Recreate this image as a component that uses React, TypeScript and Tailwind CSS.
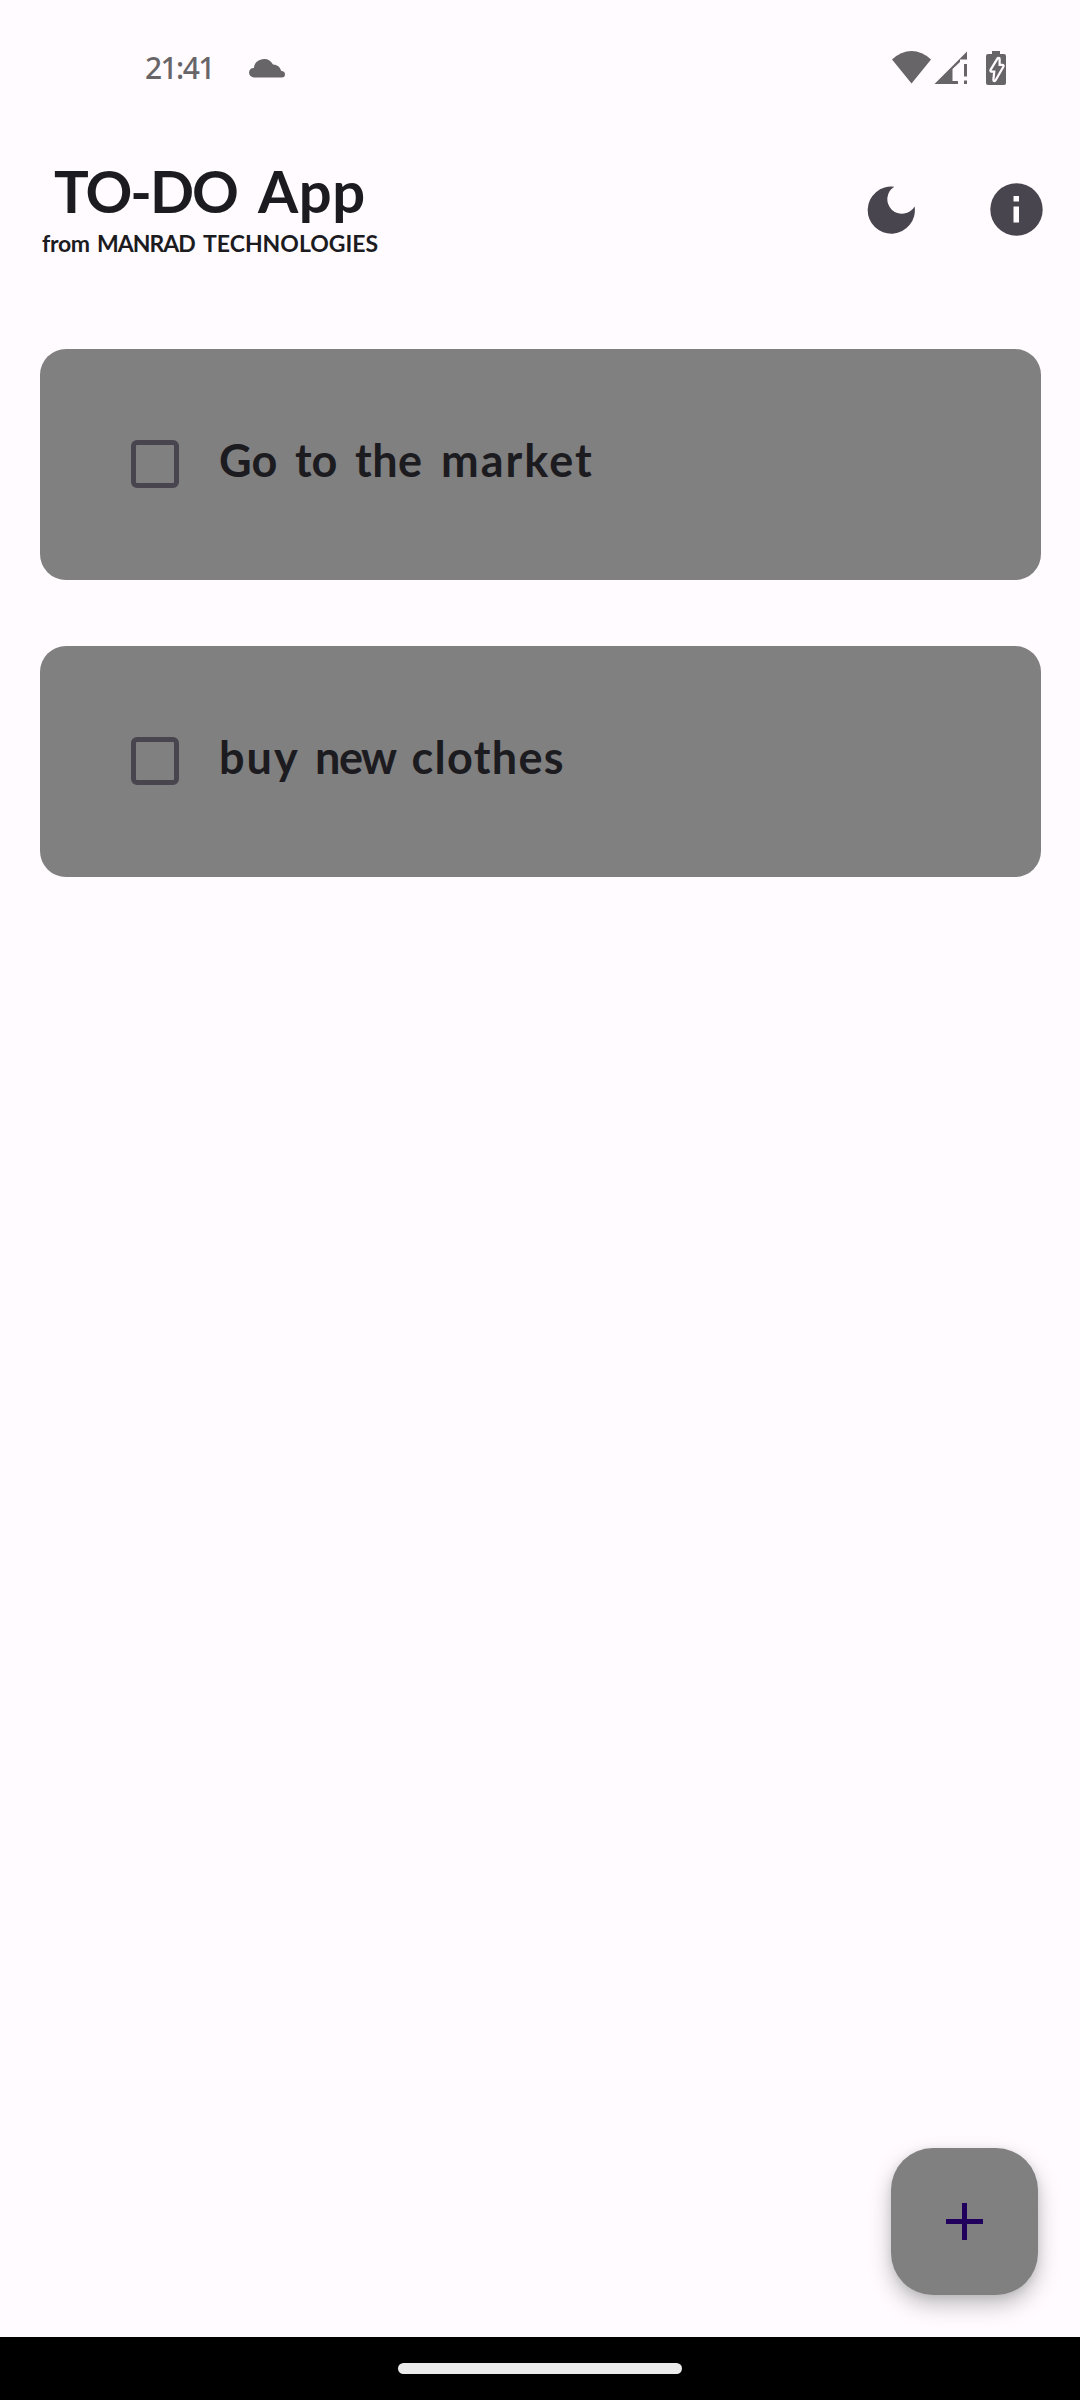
import { useState } from "react";

type Word = { text: string; className: string };
type Todo = { id: number; words: Word[] };

const todos: Todo[] = [
  {
    id: 1,
    words: [
      { text: "Go", className: "w-[76px]" },
      { text: "to", className: "w-[60px]" },
      { text: "the", className: "w-[86px] tracking-[0.5px]" },
      { text: "market", className: "tracking-[2px]" },
    ],
  },
  {
    id: 2,
    words: [
      { text: "buy", className: "w-[96px] tracking-[2px]" },
      { text: "new", className: "w-[96.5px] tracking-[-1.5px]" },
      { text: "clothes", className: "tracking-[1.3px]" },
    ],
  },
];

function StatusBar() {
  return (
    <div className="flex h-[136px] items-start pt-[50px] text-[#686569]">
      <span className="ml-[145px] w-[104px] font-['Noto_Sans',sans-serif] text-[30px] leading-[36px] font-medium tracking-[-1.6px]">
        21:41
      </span>
      <svg className="mt-[8px]" width="37" height="20" viewBox="0 0 37 20" fill="currentColor">
        <path d="M5 19.5A5 5 0 0 1 0 14.7 5 5 0 0 1 4.8 10 10.2 10.2 0 0 1 24 6.6 8.2 8.2 0 0 1 32.3 13 3.3 3.3 0 0 1 36 16.2 3.3 3.3 0 0 1 32.7 19.5Z" />
      </svg>
      <svg className="ml-[605px]" width="120" height="36" viewBox="0 0 120 36" fill="currentColor">
        <path d="M1 9.5Q10 1 20.5 1T40 9.5L20.5 33.5Z" />
        <path d="M43.5 34 76 1.5V9.5H69V12L61.5 19V31H67V34Z" />
        <path d="M73 14H76V26.5H73ZM73 30.5H76V34H73Z" />
        <path d="M101 1H109V4H113Q115 4 115 6V33Q115 35 113 35H97Q95 35 95 33V6Q95 4 97 4H101Z" />
        <path
          d="M107.5 9 100.5 20.5H104.5L103.5 30 111.5 16H107.5Z"
          stroke="#fffbff"
          strokeWidth="4.5"
          strokeLinejoin="round"
        />
        <path d="M107.5 9 100.5 20.5H104.5L103.5 30 111.5 16H107.5Z" />
      </svg>
    </div>
  );
}

function Header({ onToggleTheme }: { onToggleTheme: () => void }) {
  return (
    <header className="flex h-[212px] justify-between">
      <div className="ml-[42px]">
        <h1 className="ml-[12px] flex pt-[20px] text-[58px] leading-[70px] font-bold whitespace-nowrap">
          <span className="w-[204px] tracking-[-2px]">TO-DO</span>
          <span className="tracking-[0.5px]">App</span>
        </h1>
        <p className="mt-[2px] flex text-[23px] leading-[30px] font-bold whitespace-nowrap">
          <span className="w-[55px] tracking-[-0.3px]">from</span>
          <span className="w-[106px] tracking-[-1px]">MANRAD</span>
          <span>TECHNOLOGIES</span>
        </p>
      </div>
      <div className="flex h-[147px] items-center pr-[37px] text-[#49454f]">
        <button type="button" aria-label="Toggle theme" onClick={onToggleTheme}>
          <svg width="48" height="48" viewBox="0 0 48 48" fill="currentColor">
            <path d="M27.3 0.7A14.6 14.6 0 1 0 47.6 20.4 23.6 23.6 0 1 1 27.3 0.7Z" />
          </svg>
        </button>
        <button type="button" aria-label="About" className="ml-[75px]">
          <svg width="53" height="53" viewBox="0 0 53 53">
            <circle cx="26.5" cy="26.5" r="26.2" fill="currentColor" />
            <path d="M23.5 13H29V18.5H23.5ZM23.5 23.5H29V39.5H23.5Z" fill="#fffbff" />
          </svg>
        </button>
      </div>
    </header>
  );
}

function TodoCard({ todo }: { todo: Todo }) {
  return (
    <li className="flex h-[231px] rounded-[26px] bg-[#808080] pl-[91.5px]">
      <span className="mt-[91.5px] h-[48px] w-[48px] shrink-0 rounded-[6px] border-5 border-[#49454f]" />
      <span className="mt-[84px] ml-[40px] flex text-[45px] leading-[54px] font-bold whitespace-nowrap">
        {todo.words.map((w) => (
          <span key={w.text} className={w.className}>
            {w.text}
          </span>
        ))}
      </span>
    </li>
  );
}

export default function App() {
  const [, setDark] = useState(false);

  return (
    <div className="flex h-[2400px] w-[1080px] flex-col overflow-hidden bg-[#fffbff] font-['Lato',sans-serif] text-[#1c1b1f]">
      <StatusBar />
      <Header onToggleTheme={() => setDark((d) => !d)} />
      <ul className="mx-[39.5px] mt-[0.5px] flex flex-1 flex-col gap-[66px]">
        {todos.map((t) => (
          <TodoCard key={t.id} todo={t} />
        ))}
      </ul>
      <button
        type="button"
        aria-label="Add task"
        className="mr-[42px] mb-[42px] flex h-[147px] w-[147px] items-center justify-center self-end rounded-[42px] bg-[#808080] text-[#21005d] shadow-[0_10px_22px_rgba(0,0,0,0.25),0_2px_8px_rgba(0,0,0,0.08)]"
      >
        <svg width="37" height="37" viewBox="0 0 37 37" fill="currentColor">
          <path d="M16 0H21V16H37V21H21V37H16V21H0V16H16Z" />
        </svg>
      </button>
      <div className="flex h-[63px] justify-center bg-black pt-[26px]">
        <div className="h-[11px] w-[284px] rounded-full bg-[#ebebeb]" />
      </div>
    </div>
  );
}
